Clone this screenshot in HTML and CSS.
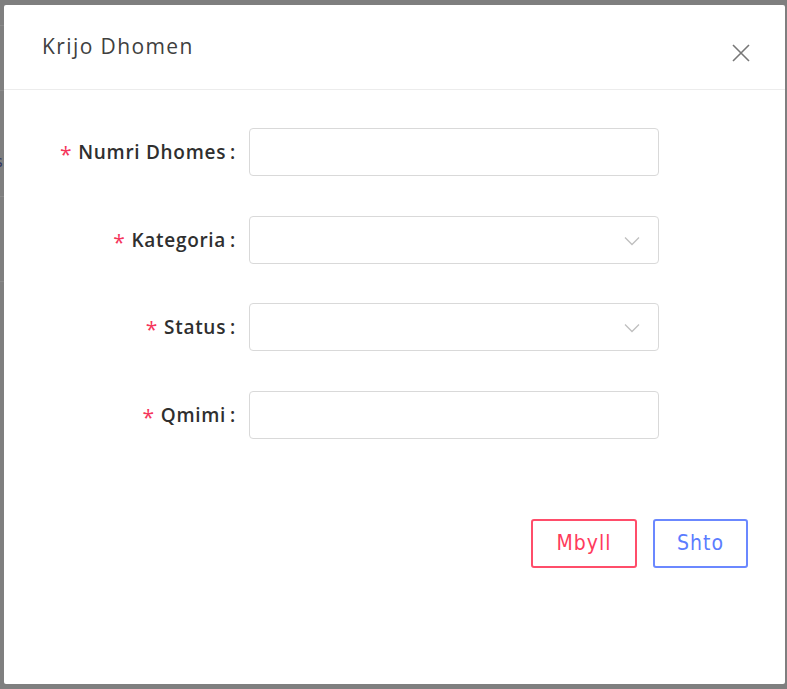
FILE: index.html
```html
<!DOCTYPE html>
<html lang="sq">
<head>
<meta charset="utf-8">
<title>Krijo Dhomen</title>
<link rel="stylesheet" href="styles.css">
</head>
<body>
<div class="backdrop">
  <div class="bg-lines">
    <span class="bg-line l1"></span>
    <span class="bg-line l2"></span>
    <span class="bg-s">s</span>
    <span class="bg-line l3"></span>
    <span class="bg-line l4"></span>
  </div>
  <div class="modal">
    <div class="modal-header">
      <h2 class="modal-title">Krijo Dhomen</h2>
      <button class="close" aria-label="close">
        <svg width="18" height="18" viewBox="0 0 18 18"><path d="M1 1 L17 17 M17 1 L1 17" stroke="#777" stroke-width="1.6" fill="none"/></svg>
      </button>
    </div>
    <div class="modal-body">
      <form class="form">
        <label class="label"><span class="req">*</span>Numri Dhomes<span class="colon">:</span></label>
        <div class="field"><input class="input" type="text"></div>

        <label class="label"><span class="req">*</span>Kategoria<span class="colon">:</span></label>
        <div class="field select">
          <svg class="chev" width="16" height="10" viewBox="0 0 16 10"><path d="M1 1.5 L8 8.5 L15 1.5" stroke="#bfbfbf" stroke-width="1.3" fill="none"/></svg>
        </div>

        <label class="label"><span class="req">*</span>Status<span class="colon">:</span></label>
        <div class="field select">
          <svg class="chev" width="16" height="10" viewBox="0 0 16 10"><path d="M1 1.5 L8 8.5 L15 1.5" stroke="#bfbfbf" stroke-width="1.3" fill="none"/></svg>
        </div>

        <label class="label"><span class="req">*</span>Qmimi<span class="colon">:</span></label>
        <div class="field"><input class="input" type="text"></div>
      </form>
      <div class="actions">
        <button class="btn btn-close">Mbyll</button>
        <button class="btn btn-add">Shto</button>
      </div>
    </div>
  </div>
</div>
</body>
</html>
```
FILE: styles.css
```css
* { box-sizing: border-box; }
html, body { margin: 0; padding: 0; }
body {
  width: 787px;
  height: 689px;
  overflow: hidden;
  background: #7f7f7f;
  font-family: "Open Sans", "Noto Sans", sans-serif;
}
.backdrop {
  position: relative;
  width: 787px;
  height: 689px;
  padding: 5px 2px 5px 4px;
}
.bg-lines { position: absolute; left: 0; top: 0; width: 4px; height: 689px; }
.bg-line { position: absolute; left: 0; width: 4px; height: 1px; background: #8a8a8a; }
.l1 { top: 25px; }
.l2 { top: 90px; }
.l3 { top: 196px; }
.l4 { top: 281px; }
.bg-s { position: absolute; left: -5px; top: 152px; font-size: 16px; color: #2e3560; line-height: 18px; }
.modal {
  position: relative;
  height: 679px;
  background: #fff;
  border-radius: 2px;
  display: flex;
  flex-direction: column;
}
.modal-header {
  height: 85px;
  border-bottom: 1px solid #ececec;
  display: flex;
  align-items: flex-start;
  justify-content: space-between;
  padding: 27px 35px 0 38px;
}
.modal-title {
  margin: 0;
  font-size: 21px;
  font-weight: 400;
  color: #404040;
  line-height: 28px;
  letter-spacing: 1.4px;
}
.close {
  border: 0;
  background: none;
  padding: 0;
  margin-top: 12px;
  width: 18px;
  height: 18px;
  cursor: pointer;
}
.close svg { display: block; }
.modal-body {
  padding: 38px 37px 0 0;
}
.form {
  display: grid;
  grid-template-columns: 233px 410px;
  column-gap: 12px;
  row-gap: 39.5px;
}
.label {
  display: flex;
  align-items: center;
  justify-content: flex-end;
  font-size: 19px;
  font-weight: 600;
  color: #2f2f2f;
  height: 48px;
  white-space: nowrap;
  letter-spacing: 0.7px;
}
.req {
  color: #f5365c;
  font-weight: 400;
  margin-right: 6px;
  font-size: 21px;
  position: relative;
  top: 2px;
}
.colon { margin-left: 4px; margin-right: 1px; }
.field {
  position: relative;
  height: 48px;
  border: 1px solid #d9d9d9;
  border-radius: 4px;
  background: #fff;
}
.input {
  width: 100%;
  height: 100%;
  border: 0;
  background: transparent;
  outline: none;
  padding: 0 12px;
  font-size: 16px;
}
.chev { position: absolute; right: 18px; top: 19px; }
.actions {
  display: flex;
  justify-content: flex-end;
  gap: 16px;
  margin-top: 80px;
}
.btn {
  height: 49px;
  background: #fff;
  border-radius: 3px;
  border: 2px solid;
  font-family: "DejaVu Sans Condensed", "Liberation Sans Narrow", sans-serif;
  font-size: 21px;
  letter-spacing: 1px;
  padding: 0;
  cursor: pointer;
}
.btn-close { width: 106px; color: #ff3b5c; border-color: #ff4d6a; }
.btn-add { width: 95px; color: #5b7cff; border-color: #6b88ff; }
```
